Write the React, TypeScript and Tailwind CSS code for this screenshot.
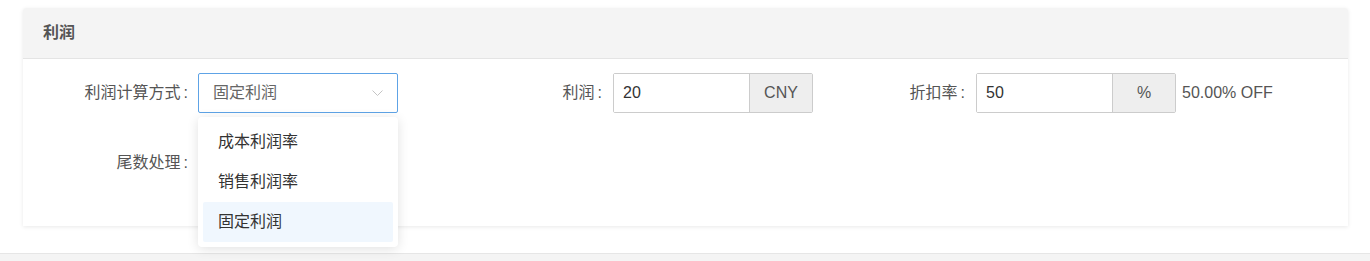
import React from "react";

const font = { fontFamily: '"Liberation Sans", "Noto Sans CJK SC", sans-serif' };

function Addon({ value, unit }: { value: string; unit: string }) {
  return (
    <div className="flex h-[40px] w-[200px] rounded-[2px] border border-[#ccc]">
      <div className="flex flex-1 items-center bg-white pl-[9px] text-[16px] text-[#333]">{value}</div>
      <div className="flex w-[63px] items-center justify-center border-l border-[#ccc] bg-[#eee] text-[16px] text-[#555]">
        {unit}
      </div>
    </div>
  );
}

export default function App() {
  return (
    <div className="relative h-[261px] w-[1370px] bg-white" style={font}>
      <div className="h-[253px] pt-[8px] pl-[23px]">
        <div className="w-[1325px] rounded-t-[3px] bg-white shadow-[0_1px_4px_rgba(0,0,0,0.09)]">
          <div className="flex h-[51px] items-center rounded-t-[3px] border-b border-[#e4e4e4] bg-[#f4f4f4] pl-[20px] text-[16px] font-bold text-[#555]">
            利润
          </div>
          <div className="pt-[14px] pb-[43px]">
            <div className="flex items-center">
              <div className="w-[175px] pr-[10px] text-right text-[16px] text-[#555]">
                利润计算方式<span className="ml-[3px]">:</span>
              </div>
              <div className="relative">
                <div className="flex h-[40px] w-[200px] items-center justify-between rounded-[2px] border border-[#5ea3e6] bg-white pl-[14px] pr-[14px] text-[16px] text-[#666]">
                  <span>固定利润</span>
                  <svg width="11" height="6" viewBox="0 0 11 6" fill="none">
                    <path d="M0.5 0.5 L5.5 5.5 L10.5 0.5" stroke="#c4c4c4" strokeWidth="1" />
                  </svg>
                </div>
                <div className="absolute left-0 top-[44px] z-10 w-[200px] rounded-[4px] bg-white p-[5px] shadow-[0_2px_12px_rgba(0,0,0,0.12)]">
                  <div className="flex h-[40px] items-center pl-[15px] text-[16px] text-[#333]">成本利润率</div>
                  <div className="flex h-[40px] items-center pl-[15px] text-[16px] text-[#333]">销售利润率</div>
                  <div className="flex h-[40px] items-center rounded-[2px] bg-[#f0f7fe] pl-[15px] text-[16px] text-[#333]">固定利润</div>
                </div>
              </div>
              <div className="w-[215px] pr-[11px] text-right text-[16px] text-[#555]">
                利润<span className="ml-[3px]">:</span>
              </div>
              <Addon value="20" unit="CNY" />
              <div className="w-[163px] pr-[11px] text-right text-[16px] text-[#555]">
                折扣率<span className="ml-[3px]">:</span>
              </div>
              <Addon value="50" unit="%" />
              <div className="ml-[6px] text-[16px] text-[#555]">50.00% OFF</div>
            </div>
            <div className="mt-[30px] flex h-[40px] items-center">
              <div className="w-[175px] pr-[10px] text-right text-[16px] text-[#555]">
                尾数处理<span className="ml-[3px]">:</span>
              </div>
            </div>
          </div>
        </div>
      </div>
      <div className="h-[8px] border-t border-[#e6e6e6] bg-[#f4f4f4]" />
    </div>
  );
}
